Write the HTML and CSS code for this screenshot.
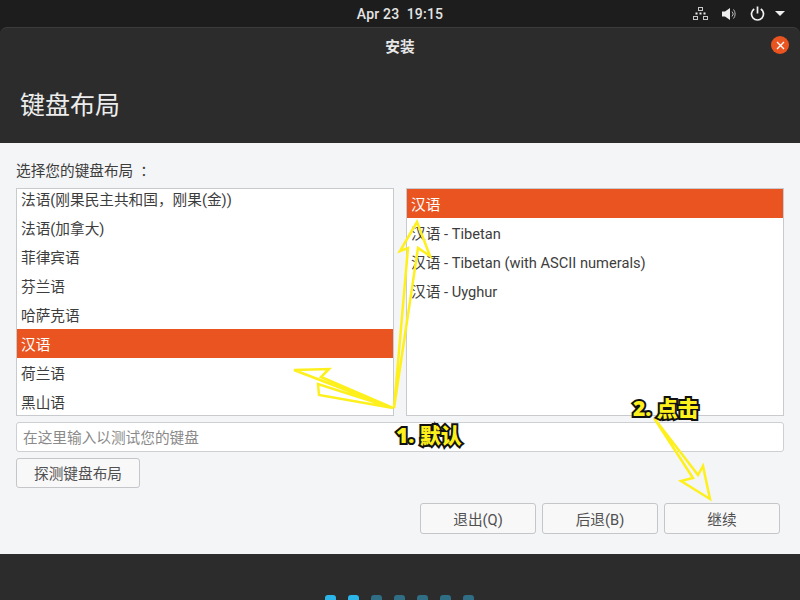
FILE: index.html
```html
<!DOCTYPE html>
<html lang="zh-CN">
<head>
    <meta charset="UTF-8">
    <title>安装</title>
    <link rel="stylesheet" href="styles.css">
</head>
<body>
    <div class="topbar">
        <div class="clock">Apr 23&nbsp;&nbsp;19:15</div>
        <div class="tray">
            <svg class="tray-net" width="15" height="14" viewBox="0 0 15 14" fill="none" stroke="#c8c8c8" stroke-width="1">
                <rect x="5.500" y="0.500" width="4" height="3"/>
                <rect x="0.500" y="9.500" width="4" height="3"/>
                <rect x="10.500" y="9.500" width="4" height="3"/>
                <path d="M2.500 6.500h2M6.500 6.500h2M10.500 6.500h2" stroke="#eeeeee" stroke-width="2"/>
            </svg>
            <svg class="tray-vol" width="14" height="14" viewBox="0 0 14 14">
                <path d="M0 4.500h3L8 1v12L3 9.500H0z" fill="#eeeeee"/>
                <path d="M10 4.500a3.500 3.500 0 0 1 0 5M11.500 2.500a7 7 0 0 1 0 9" fill="none" stroke="#bbbbbb" stroke-width="1"/>
            </svg>
            <svg class="tray-power" width="15" height="15" viewBox="0 0 15 15" fill="none" stroke="#f2f2f2" stroke-width="1.700">
                <path d="M4.200 3a6 6 0 1 0 6.600 0"/>
                <path d="M7.500 0.500v7"/>
            </svg>
            <div class="tray-caret"></div>
        </div>
    </div>

    <div class="window">
        <div class="titlebar">
            <div class="title">安装</div>
            <div class="close">
                <svg width="9" height="9" viewBox="0 0 9 9" stroke="#ffffff" stroke-width="1.300">
                    <path d="M1 1l7 7M8 1l-7 7"/>
                </svg>
            </div>
        </div>
        <div class="heading">键盘布局</div>

        <div class="content">
            <div class="prompt">选择您的键盘布局<span class="colon">：</span></div>
            <div class="lists">
                <div class="list list-left">
                    <div class="row">法语(刚果民主共和国，刚果(金))</div>
                    <div class="row">法语(加拿大)</div>
                    <div class="row">菲律宾语</div>
                    <div class="row">芬兰语</div>
                    <div class="row">哈萨克语</div>
                    <div class="row selected">汉语</div>
                    <div class="row">荷兰语</div>
                    <div class="row">黑山语</div>
                </div>
                <div class="list">
                    <div class="row selected">汉语</div>
                    <div class="row">汉语 - Tibetan</div>
                    <div class="row">汉语 - Tibetan (with ASCII numerals)</div>
                    <div class="row">汉语 - Uyghur</div>
                </div>
            </div>
            <div class="test-input">在这里输入以测试您的键盘</div>
            <button class="btn btn-detect">探测键盘布局</button>
            <div class="actions">
                <button class="btn btn-action">退出(Q)</button>
                <button class="btn btn-action">后退(B)</button>
                <button class="btn btn-action">继续</button>
            </div>
        </div>

        <div class="footer">
            <span class="dot on"></span>
            <span class="dot on"></span>
            <span class="dot"></span>
            <span class="dot"></span>
            <span class="dot"></span>
            <span class="dot"></span>
            <span class="dot"></span>
        </div>
    </div>

    <!-- annotations drawn over the screenshot -->
    <svg class="arrows" width="800" height="600" viewBox="0 0 800 600" fill="none" stroke="#fdf01c" stroke-width="2.500" stroke-linejoin="miter">
        <path d="M393 408L294 370L329 369L321 377L393 408L318 384L319 395Z"/>
        <path d="M394 408L408 248L400 251L417 222L430 256L418 248Z"/>
        <path d="M654 418L698 475L703 466L710 499L681 481L693 478Z"/>
    </svg>
    <div class="note note-1">1. 默认</div>
    <div class="note note-2">2. 点击</div>
</body>
</html>
```
FILE: styles.css
```css
* {
    margin: 0;
    padding: 0;
    box-sizing: border-box;
}

body {
    width: 800px;
    height: 600px;
    overflow: hidden;
    position: relative;
    font-family: Roboto, "Noto Sans CJK SC", sans-serif;
    font-size: 14.67px;
    color: #3d3d3d;
    background: #1d1d1d;
}

.topbar {
    height: 27px;
    display: flex;
    align-items: center;
    justify-content: center;
    position: relative;
    background: #1d1d1d;
    color: #e4e4e4;
}

.clock {
    font-size: 14px;
    font-weight: 500;
    letter-spacing: 0.2px;
}

.tray {
    position: absolute;
    top: 6px;
    right: 15px;
    display: flex;
    align-items: center;
}

.tray-net,
.tray-vol {
    margin-right: 14px;
}

.tray-caret {
    width: 0;
    height: 0;
    margin-left: 10px;
    border-left: 5px solid transparent;
    border-right: 5px solid transparent;
    border-top: 5px solid #eeeeee;
}

.window {
    height: 573px;
    display: flex;
    flex-direction: column;
    background: #2c2c2c;
    border-top: 1px solid #3c3c3c;
    border-radius: 7px 7px 0 0;
}

.titlebar {
    height: 37px;
    display: flex;
    align-items: center;
    justify-content: center;
    position: relative;
}

.title {
    color: #e8e8e8;
    font-weight: 700;
    margin-top: -3px;
}

.close {
    position: absolute;
    top: 8px;
    right: 11px;
    width: 18px;
    height: 18px;
    display: flex;
    align-items: center;
    justify-content: center;
    border-radius: 50%;
    background: #e95420;
}

.heading {
    height: 78px;
    padding: 23px 0 0 20px;
    color: #ededed;
    font-size: 25px;
    line-height: 36px;
}

.content {
    height: 411px;
    position: relative;
    padding: 18px 16px 0;
    background: #f4f5f6;
}

.prompt {
    height: 27px;
    line-height: 21px;
}

.colon {
    margin-left: 7px;
}

.lists {
    display: flex;
    gap: 12px;
}

.list {
    width: 378px;
    height: 228px;
    overflow: hidden;
    background: #ffffff;
    border: 1px solid #c8cacd;
}

.list-left .row:first-child {
    height: 24px;
    line-height: 22px;
}

.row {
    height: 29px;
    line-height: 33px;
    padding-left: 4px;
    white-space: nowrap;
    overflow: hidden;
}

.selected {
    background: #e95420;
    color: #ffffff;
}

.test-input {
    height: 30px;
    margin-top: 6px;
    padding-left: 6px;
    line-height: 30px;
    color: #8a8a8a;
    background: #ffffff;
    border: 1px solid #cdcfd2;
    border-radius: 3px;
}

.btn {
    height: 30px;
    font-family: inherit;
    font-size: 14.67px;
    color: #505050;
    background: #f8f8f9;
    border: 1px solid #c4c6c9;
    border-radius: 3px;
}

.btn-detect {
    display: block;
    width: 124px;
    margin-top: 6px;
    padding-bottom: 2px;
}

.actions {
    display: flex;
    justify-content: flex-end;
    gap: 6px;
    margin: 15px 4px 0 0;
}

.btn-action {
    width: 116px;
    height: 31px;
}

.footer {
    flex: 1;
    display: flex;
    justify-content: center;
    gap: 12px;
    padding: 41px 1px 0 0;
    overflow: hidden;
}

.dot {
    width: 11px;
    height: 11px;
    flex: none;
    border-radius: 3px;
    background: #2f6e85;
}

.dot.on {
    background: #2cb5e8;
}

.arrows {
    position: absolute;
    top: 0;
    left: 0;
}

.note {
    position: absolute;
    font-family: "Noto Sans", "Noto Sans CJK SC", sans-serif;
    font-size: 21px;
    font-weight: 900;
    line-height: 26px;
    color: #fdf01c;
    -webkit-text-stroke: 4px #111111;
    paint-order: stroke fill;
}

.note-1 {
    top: 422px;
    left: 396px;
}

.note-2 {
    top: 395px;
    left: 633px;
}
```
